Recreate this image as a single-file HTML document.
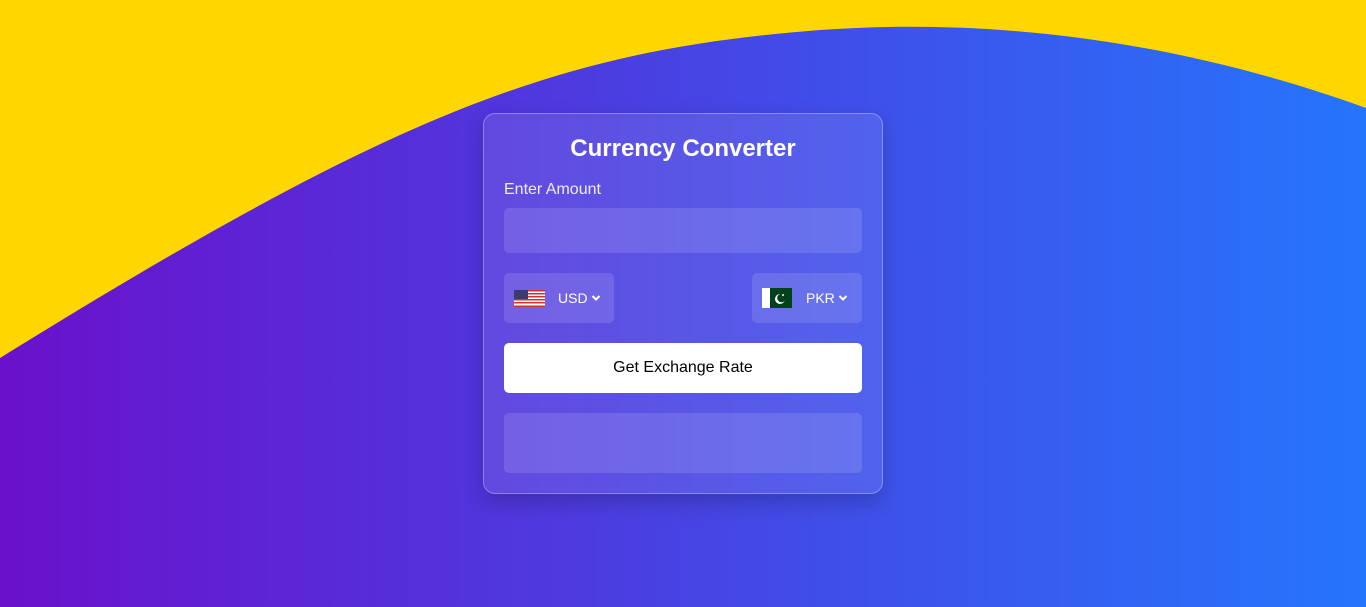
<!DOCTYPE html>
<html><head><meta charset="utf-8"><style>
*{margin:0;padding:0;box-sizing:border-box}
body{width:1366px;height:607px;overflow:hidden;font-family:"Liberation Sans",sans-serif;background:linear-gradient(90deg,#6a11cb,#2575fc);position:relative}
svg.bg{position:absolute;left:0;top:0}
.card{position:absolute;left:483px;top:113px;width:400px;height:381px;border-radius:12px;background:rgba(255,255,255,0.1);border:1px solid rgba(255,255,255,0.3);box-shadow:0 8px 20px rgba(0,0,0,0.2);color:#fff}
h1{position:absolute;top:21px;width:100%;text-align:center;font-size:24px;font-weight:bold}
.lbl{position:absolute;left:20px;top:67px;font-size:16px;color:#eee}
.box{position:absolute;background:rgba(255,255,255,0.12);border-radius:5px}
.sel{display:flex;align-items:center;font-size:14px}
.btn{position:absolute;left:20px;top:229px;width:358px;height:50px;background:#fff;border-radius:5px;color:#000;font-size:16px;text-align:center;line-height:50px}
</style></head><body>
<svg class="bg" width="1366" height="607"><path d="M0 0H1366V108C1150 30 960 20 820 30C560 50 400 110 0 358Z" fill="#ffd700"/></svg>
<div class="card">
<h1>Currency Converter</h1>
<div class="lbl">Enter Amount</div>
<div class="box" style="left:20px;top:94px;width:358px;height:45px"></div>
<div class="box sel" style="left:20px;top:159px;width:110px;height:50px;padding-left:10px">
<svg width="31" height="17"><rect width="31" height="17" fill="#fff"/><g fill="#c33"><rect y="0" width="31" height="1.5"/><rect y="3" width="31" height="1.5"/><rect y="6" width="31" height="1.5"/><rect y="9" width="31" height="1.5"/><rect y="12" width="31" height="1.5"/><rect y="15.5" width="31" height="1.5"/></g><rect width="14" height="9" fill="#3c3b6e"/></svg>
<span style="margin-left:13px">USD</span><svg width="10" height="8" style="margin-left:3px"><path d="M1.5 2L5 5.5L8.5 2" stroke="#fff" stroke-width="2" fill="none"/></svg></div>
<div class="box sel" style="left:268px;top:159px;width:110px;height:50px;padding-left:10px">
<svg width="30" height="20"><rect width="30" height="20" fill="#01411c"/><rect width="8" height="20" fill="#fff"/><circle cx="18" cy="11" r="5" fill="#fff"/><circle cx="19.5" cy="10" r="4.3" fill="#01411c"/><circle cx="21" cy="7" r="1" fill="#fff"/></svg>
<span style="margin-left:14px">PKR</span><svg width="10" height="8" style="margin-left:3px"><path d="M1.5 2L5 5.5L8.5 2" stroke="#fff" stroke-width="2" fill="none"/></svg></div>
<div class="btn">Get Exchange Rate</div>
<div class="box" style="left:20px;top:299px;width:358px;height:60px"></div>
</div>
</body></html>
